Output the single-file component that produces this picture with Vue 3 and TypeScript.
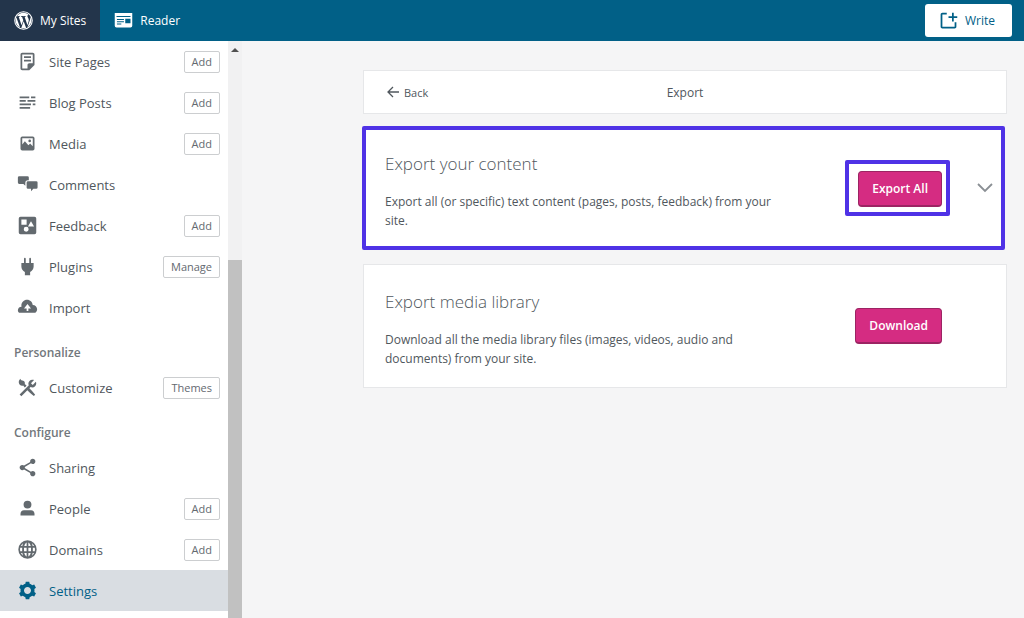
<script setup lang="ts">
import { ref } from 'vue'

interface Item {
  label: string
  icon: string
  action?: string
}
interface Group {
  title?: string
  items: Item[]
}

const selected = ref('Settings')

const groups: Group[] = [
  {
    items: [
      { label: 'Site Pages', icon: 'pages', action: 'Add' },
      { label: 'Blog Posts', icon: 'posts', action: 'Add' },
      { label: 'Media', icon: 'media', action: 'Add' },
      { label: 'Comments', icon: 'comments' },
      { label: 'Feedback', icon: 'feedback', action: 'Add' },
      { label: 'Plugins', icon: 'plugins', action: 'Manage' },
      { label: 'Import', icon: 'import' },
    ],
  },
  {
    title: 'Personalize',
    items: [{ label: 'Customize', icon: 'customize', action: 'Themes' }],
  },
  {
    title: 'Configure',
    items: [
      { label: 'Sharing', icon: 'sharing' },
      { label: 'People', icon: 'people', action: 'Add' },
      { label: 'Domains', icon: 'domains', action: 'Add' },
      { label: 'Settings', icon: 'settings' },
    ],
  },
]

const icons: Record<string, string> = {
  pages:
    'M16 8H8V6h8v2zm0 2H8v2h8v-2zm4-6v12l-6 6H6c-1.105 0-2-.895-2-2V4c0-1.105.895-2 2-2h12c1.105 0 2 .895 2 2zm-2 10V4H6v16h6v-4c0-1.105.895-2 2-2h4z',
  posts:
    'M3 5h11v2H3zM16 5h5v2h-5zM3 9h7v2H3zM12 9h9v2h-9zM3 13h13v2H3zM18 13h3v2h-3zM3 17h12v2H3z',
  media:
    'M6 4h12a2 2 0 0 1 2 2v12a2 2 0 0 1-2 2H6a2 2 0 0 1-2-2V6a2 2 0 0 1 2-2zM6 6v7l3-3.500 4 4.500 2-2 3 3V6zM14.500 7.500a1.500 1.500 0 1 1 0 3 1.500 1.500 0 0 1 0-3z',
  comments:
    'M2.500 2.500h9.500a1.500 1.500 0 0 1 1.500 1.500v3.200h-1a3 3 0 0 0-3 3v3.300L7.300 11.300H2.500A1.500 1.500 0 0 1 1 9.800V4a1.500 1.500 0 0 1 1.500-1.500zM12.500 8.300H22a1.500 1.500 0 0 1 1.500 1.500v5.500a1.500 1.500 0 0 1-1.500 1.500h-3.300L16 19.800v-3h-3.500a1.500 1.500 0 0 1-1.500-1.500V9.800a1.500 1.500 0 0 1 1.500-1.500z',
  feedback:
    'M4 2h16a2 2 0 0 1 2 2v16a2 2 0 0 1-2 2H4a2 2 0 0 1-2-2V4a2 2 0 0 1 2-2zM5 5v6h6V5zM16 7l-3.500 6h7zM10.500 13.500a2.800 2.800 0 1 0 0 5.600 2.800 2.800 0 0 0 0-5.600z',
  plugins:
    'M16 8V3c0-.552-.448-1-1-1s-1 .448-1 1v5h-4V3c0-.552-.448-1-1-1s-1 .448-1 1v5H5v4c0 2.790 1.637 5.193 4 6.317V22h6v-3.683c2.363-1.124 4-3.527 4-6.317V8h-3z',
  import:
    'M18 9c-.01 0-.017.002-.025.003C17.720 5.646 14.922 3 11.500 3 7.910 3 5 5.910 5 9.500c0 .524.07 1.030.186 1.520C5.123 11.015 5.064 11 5 11c-2.210 0-4 1.790-4 4 0 1.202.54 2.267 1.380 3h18.593C22.196 17.090 23 15.643 23 14c0-2.760-2.240-5-5-5zm-5 4v3h-2v-3H8l4-5 4 5h-3z',
  customize:
    'M2 6c0-1.505.78-3.080 2-4 0 .845.69 2 2 2 1.657 0 3 1.343 3 3 0 .386-.08.752-.212 1.090.74.594 1.476 1.190 2.190 1.810L8.900 11.980c-.62-.716-1.214-1.454-1.807-2.192C6.753 9.920 6.387 10 6 10c-2.210 0-4-1.790-4-4zm12.152 6.848l1.340-1.340c.607.304 1.283.492 2.008.492 2.485 0 4.500-2.015 4.500-4.500 0-.725-.188-1.400-.493-2.007L18 9l-2-2 3.507-3.507C18.900 3.188 18.225 3 17.500 3 15.015 3 13 5.015 13 7.500c0 .725.188 1.400.493 2.007L3 20l2 2 6.848-6.848c1.885 1.928 3.874 3.753 5.977 5.450l1.425 1.148 1.500-1.500-1.150-1.425c-1.695-2.103-3.520-4.092-5.448-5.977z',
  sharing:
    'M18 16c-.788 0-1.500.31-2.034.807L8.910 12.700c.05-.23.09-.46.09-.7s-.04-.47-.09-.7l7.050-4.110c.54.5 1.250.81 2.040.81 1.660 0 3-1.340 3-3s-1.340-3-3-3-3 1.340-3 3c0 .24.04.47.09.7L8.040 9.810C7.500 9.310 6.790 9 6 9c-1.660 0-3 1.340-3 3s1.340 3 3 3c.79 0 1.500-.31 2.040-.81l7.048 4.118c-.053.223-.088.453-.088.692 0 1.657 1.343 3 3 3s3-1.343 3-3-1.343-3-3-3z',
  people:
    'M12 3a4.500 4.500 0 1 1 0 9 4.500 4.500 0 0 1 0-9zM8 14h8c2.500 0 4 2 4 4v2H4v-2c0-2 1.500-4 4-4z',
  domains:
    'M12 1.500a10.500 10.500 0 1 0 0 21 10.500 10.500 0 0 0 0-21zM11 4v4H8.300C8.900 5.900 9.900 4.500 11 4zM13 4c1.100.5 2.100 1.900 2.700 4H13zM7 4.900C6.600 5.800 6.300 6.900 6.100 8H4.500A9 9 0 0 1 7 4.900zM17 4.900A9 9 0 0 1 19.500 8h-1.600c-.2-1.100-.5-2.200-.9-3.100zM3.700 10h2.200v4H3.700a8.500 8.500 0 0 1 0-4zM8 10h3v4H8zM13 10h3v4h-3zM18.100 10h2.200a8.500 8.500 0 0 1 0 4h-2.200zM4.500 16h1.600c.2 1.100.5 2.200.9 3.100A9 9 0 0 1 4.500 16zM8.300 16H11v4c-1.100-.5-2.100-1.900-2.700-4zM13 16h2.700c-.6 2.100-1.600 3.500-2.700 4zM17.900 16h1.600a9 9 0 0 1-2.500 3.100c.4-.9.7-2 .9-3.100z',
  settings:
    'M20 12c0-.568-.061-1.122-.174-1.656l1.834-1.612-2-3.464-2.322.786c-.819-.736-1.787-1.308-2.859-1.657L14 2h-4l-.479 2.396c-1.072.349-2.040.921-2.859 1.657L4.340 5.268l-2 3.464 1.834 1.612C4.061 10.878 4 11.432 4 12s.061 1.122.174 1.656L2.340 15.268l2 3.464 2.322-.786c.819.736 1.787 1.308 2.859 1.657L10 22h4l.479-2.396c1.072-.349 2.039-.921 2.859-1.657l2.322.786 2-3.464-1.834-1.612c.113-.535.174-1.089.174-1.657zm-8 4c-2.210 0-4-1.790-4-4s1.790-4 4-4 4 1.790 4 4-1.790 4-4 4z',
}
</script>

<template>
  <div class="app">
    <header class="masterbar">
      <a class="tab active" href="#sites">
        <svg class="icon" viewBox="0 0 24 24" aria-hidden="true">
          <circle cx="12" cy="12" r="10" fill="none" stroke="currentColor" stroke-width="1.200" />
          <path
            d="M12.158 12.786l-2.698 7.840c.806.236 1.657.365 2.540.365 1.047 0 2.050-.18 2.986-.51-.024-.037-.046-.078-.065-.123l-2.762-7.570zM3.008 12c0 3.560 2.070 6.634 5.068 8.092L3.788 8.342c-.5 1.117-.78 2.354-.78 3.658zm15.060-.454c0-1.112-.398-1.880-.74-2.480-.456-.74-.883-1.368-.883-2.110 0-.825.627-1.595 1.510-1.595.04 0 .078.006.116.008-1.598-1.464-3.730-2.360-6.070-2.360-3.140 0-5.904 1.613-7.512 4.053.21.008.41.012.58.012.94 0 2.395-.114 2.395-.114.484-.028.54.684.057.74 0 0-.487.058-1.030.086l3.275 9.740 1.968-5.902-1.400-3.838c-.485-.028-.944-.085-.944-.085-.486-.03-.43-.77.056-.742 0 0 1.484.114 2.368.114.94 0 2.397-.114 2.397-.114.486-.028.543.684.058.74 0 0-.488.058-1.030.086l3.250 9.665.897-2.997c.456-1.170.684-2.137.684-2.907zm1.820-3.860c.04.286.06.593.06.924 0 .912-.17 1.938-.683 3.220l-2.746 7.940c2.672-1.558 4.470-4.454 4.470-7.770 0-1.564-.4-3.033-1.100-4.314z"
          />
        </svg>
        <span>My Sites</span>
      </a>
      <a class="tab" href="#reader">
        <svg class="icon" viewBox="0 0 24 24" aria-hidden="true">
          <path
            fill-rule="evenodd"
            d="M2 3.500h20v14.500a2 2 0 0 1-2 2H4a2 2 0 0 1-2-2zM4 6.800v1.200h16V6.800zM4.500 10.300v1.200h8v-1.200zM14 10v5h6v-5zM4.500 12.800v1.200h8v-1.200zM4.500 15.300v1.200h5v-1.200z"
          />
        </svg>
        <span>Reader</span>
      </a>
      <button class="write" type="button">
        <svg class="icon" viewBox="0 0 24 24" aria-hidden="true">
          <path d="M21 14v5c0 1.105-.895 2-2 2H5c-1.105 0-2-.895-2-2V5c0-1.105.895-2 2-2h5v2H5v14h14v-5h2z" />
          <path d="M22 7h-4V3h-2v4h-4v2h4v4h2V9h4V7z" />
        </svg>
        <span>Write</span>
      </button>
    </header>

    <div class="body">
      <aside class="sidebar">
        <nav class="menu">
          <section v-for="(group, g) in groups" :key="g">
            <h2 v-if="group.title" class="group-title">{{ group.title }}</h2>
            <ul class="list">
              <li
                v-for="item in group.items"
                :key="item.label"
                class="row"
                :class="{ selected: item.label === selected }"
              >
                <a class="link" href="#" @click.prevent="selected = item.label">
                  <svg class="glyph" viewBox="0 0 24 24" aria-hidden="true">
                    <path fill-rule="evenodd" :d="icons[item.icon]" />
                  </svg>
                  <span>{{ item.label }}</span>
                </a>
                <button v-if="item.action" class="small" type="button">{{ item.action }}</button>
              </li>
            </ul>
          </section>
        </nav>
        <div class="track" aria-hidden="true">
          <span class="arrow"></span>
          <span class="thumb"></span>
        </div>
      </aside>

      <main class="content">
        <div class="card head">
          <a class="back" href="#settings">
            <svg viewBox="0 0 12 12" aria-hidden="true">
              <path d="M6 1L1 6l5 5M1 6h11" fill="none" stroke="currentColor" stroke-width="1.300" />
            </svg>
            <span>Back</span>
          </a>
          <h1 class="page-title">Export</h1>
        </div>

        <section class="card panel highlighted">
          <div class="copy">
            <h2 class="title">Export your content</h2>
            <p class="text">
              Export all (or specific) text content (pages, posts, feedback) from your site.
            </p>
          </div>
          <div class="callout">
            <button class="primary" type="button">Export All</button>
          </div>
          <button class="toggle" type="button" aria-label="Show export options">
            <svg viewBox="0 0 16 10" aria-hidden="true">
              <path d="M1 1l7 7 7-7" fill="none" stroke="currentColor" stroke-width="1.800" />
            </svg>
          </button>
        </section>

        <section class="card panel">
          <div class="copy">
            <h2 class="title">Export media library</h2>
            <p class="text">
              Download all the media library files (images, videos, audio and documents) from your
              site.
            </p>
          </div>
          <button class="primary download" type="button">Download</button>
        </section>
      </main>
    </div>
  </div>
</template>

<style>
body {
  margin: 0;
  background: #f5f5f6;
}
</style>

<style scoped>
.app {
  height: 100vh;
  display: flex;
  flex-direction: column;
  overflow: hidden;
  background: #f5f5f6;
  color: #50575d;
  font-family: 'Open Sans', 'Noto Sans', sans-serif;
  font-size: 13px;
}
.app * {
  box-sizing: border-box;
}
button {
  font-family: inherit;
  cursor: pointer;
}
svg {
  display: block;
  flex: none;
  fill: currentColor;
}
a {
  color: inherit;
  text-decoration: none;
}

.masterbar {
  flex: none;
  height: 41px;
  display: flex;
  align-items: center;
  padding-right: 12px;
  background: #016087;
  color: #fff;
  font-size: 12px;
}
.tab {
  height: 100%;
  display: flex;
  align-items: center;
  gap: 6px;
  padding: 0 14px 0 13px;
}
.tab.active {
  background: #23354b;
}
.icon {
  width: 21px;
  height: 21px;
}
.write {
  margin-left: auto;
  height: 33px;
  display: flex;
  align-items: center;
  gap: 6px;
  padding: 0 17px 0 13px;
  border: 0;
  border-radius: 3px;
  background: #fff;
  color: #016087;
  font-size: 12px;
}

.body {
  flex: 1;
  min-height: 0;
  display: flex;
}
.sidebar {
  flex: none;
  display: flex;
}
.menu {
  width: 228px;
  background: #fff;
}
.list {
  margin: 0;
  padding: 0;
  list-style: none;
}
.row {
  height: 41px;
  display: flex;
  align-items: center;
  padding-right: 8px;
}
.row.selected {
  background: #d9dde2;
  color: #016087;
}
.link {
  flex: 1;
  height: 100%;
  display: flex;
  align-items: center;
  gap: 11px;
  padding-left: 17px;
}
.glyph {
  width: 21px;
  height: 21px;
  color: #636a6f;
}
.selected .glyph {
  color: #016087;
}
.small {
  height: 22px;
  padding: 0 7px;
  border: 1px solid #ccced0;
  border-radius: 2px;
  background: #fff;
  color: #646970;
  font-size: 11px;
  font-weight: 500;
  line-height: 18px;
}
.group-title {
  height: 39px;
  margin: 0;
  padding: 14px 14px 0;
  font-size: 12px;
  font-weight: 600;
  line-height: 22px;
  color: #72777c;
}
.track {
  width: 14px;
  display: flex;
  flex-direction: column;
  align-items: center;
  padding-top: 7px;
  background: #f1f1f2;
}
.arrow {
  border: 4px solid transparent;
  border-top: 0;
  border-bottom-color: #505050;
}
.thumb {
  width: 100%;
  flex: 1;
  margin-top: 208px;
  background: #c1c1c1;
}

.content {
  flex: 1;
  padding: 29px 17px 0 121px;
}
.card {
  background: #fff;
  border: 1px solid #e6e7e9;
}
.head {
  height: 44px;
  display: grid;
  grid-template-columns: 1fr auto 1fr;
  align-items: center;
  padding: 0 23px;
  margin-bottom: 12px;
}
.back {
  display: flex;
  align-items: center;
  gap: 5px;
  font-size: 11px;
  font-weight: 500;
}
.back svg {
  width: 12px;
  height: 12px;
}
.page-title {
  margin: 0;
  font-size: 12px;
  font-weight: 400;
}
.panel {
  min-height: 124px;
  display: flex;
  align-items: center;
  padding: 0 0 0 21px;
  margin-bottom: 14px;
}
.panel.highlighted {
  margin-left: -1px;
  margin-right: 2px;
  border: 4px solid #4f32e6;
  border-radius: 2px;
  padding-left: 19px;
}
.copy {
  flex: 1;
  max-width: 400px;
  margin-right: auto;
  padding-top: 4px;
}
.title {
  margin: 0 0 15px;
  font-size: 17px;
  font-weight: 300;
  line-height: 26px;
}
.text {
  margin: 0;
  font-size: 12px;
  line-height: 19px;
}
.callout {
  padding: 7px 4px 5px 9px;
  border: 4px solid #4f32e6;
  border-radius: 2px;
}
.primary {
  height: 36px;
  padding: 0 13px;
  border: 1px solid #9c2463;
  border-bottom-width: 2px;
  border-radius: 4px;
  background: #d52c82;
  color: #fff;
  font-size: 12px;
  font-weight: 600;
}
.download {
  margin-right: 64px;
}
.toggle {
  margin: 0 8px 0 27px;
  padding: 0;
  border: 0;
  background: none;
  color: #8a8f94;
}
.toggle svg {
  width: 16px;
  height: 10px;
}
</style>
